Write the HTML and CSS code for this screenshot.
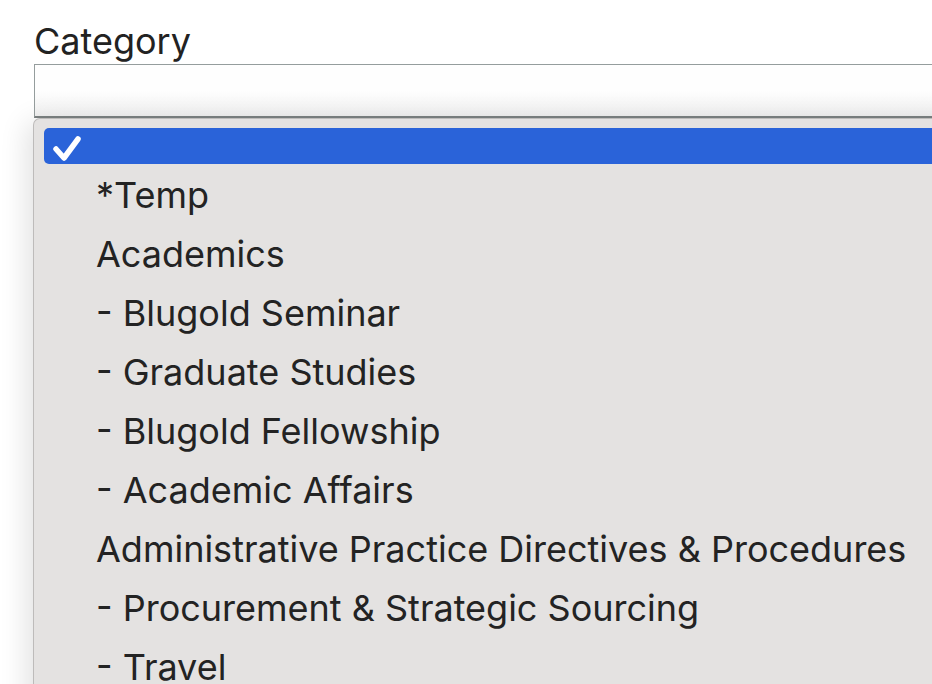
FILE: index.html
```html
<!DOCTYPE html>
<html lang="en">
<head>
    <meta charset="UTF-8">
    <meta name="viewport" content="width=device-width, initial-scale=1.0">
    <title>Category</title>
    <link rel="stylesheet" href="styles.css">
</head>
<body>
    <div class="field">
        <label class="field-label">Category</label>
        <div class="select-box"></div>
        <div class="menu">
            <ul class="menu-list">
                <li class="menu-item is-selected">
                    <svg class="check" width="30" height="28" viewBox="0 0 30 28">
                        <path d="M4 15 L12 24 L26 5" fill="none" stroke="#fff" stroke-width="5.5" stroke-linecap="round" stroke-linejoin="round"/>
                    </svg>
                </li>
                <li class="menu-item">*Temp</li>
                <li class="menu-item">Academics</li>
                <li class="menu-item">- Blugold Seminar</li>
                <li class="menu-item">- Graduate Studies</li>
                <li class="menu-item">- Blugold Fellowship</li>
                <li class="menu-item">- Academic Affairs</li>
                <li class="menu-item">Administrative Practice Directives &amp; Procedures</li>
                <li class="menu-item">- Procurement &amp; Strategic Sourcing</li>
                <li class="menu-item">- Travel</li>
            </ul>
        </div>
    </div>
</body>
</html>
```

FILE: styles.css
```css
html, body {
    margin: 0;
    padding: 0;
    background: #fff;
    overflow: hidden;
    height: 684px;
}
body {
    font-family: Inter, "Noto Sans", sans-serif;
    color: #222;
}
.field {
    padding: 18px 0 0 34px;
    width: 1000px;
}
.field-label {
    display: block;
    font-size: 36px;
    line-height: 46px;
    color: #222;
}
.select-box {
    height: 51px;
    border: 1px solid #959d9d;
    border-bottom: 2px solid #7c8282;
    border-right: none;
    background: linear-gradient(#fefefe 50%, #f1f1f1);
}
.menu {
    margin-left: -1px;
    background: #e4e2e1;
    border: 1px solid #bdbbba;
    border-right: none;
    border-radius: 7px 0 0 0;
    box-shadow: -6px 4px 28px rgba(0, 0, 0, 0.12);
    padding-top: 9px;
    height: 700px;
}
.menu-list {
    list-style: none;
    margin: 0;
    padding: 0;
}
.menu-item {
    height: 59px;
    line-height: 59px;
    padding-left: 62px;
    font-size: 36px;
    color: #232323;
    white-space: nowrap;
}
.menu-item.is-selected {
    height: 36px;
    margin-left: 10px;
    margin-bottom: 2px;
    padding-left: 0;
    background: #2a63d9;
    border-radius: 5px 0 0 5px;
    display: flex;
    align-items: center;
}
.check {
    margin-left: 8px;
    margin-top: 4px;
}
```
